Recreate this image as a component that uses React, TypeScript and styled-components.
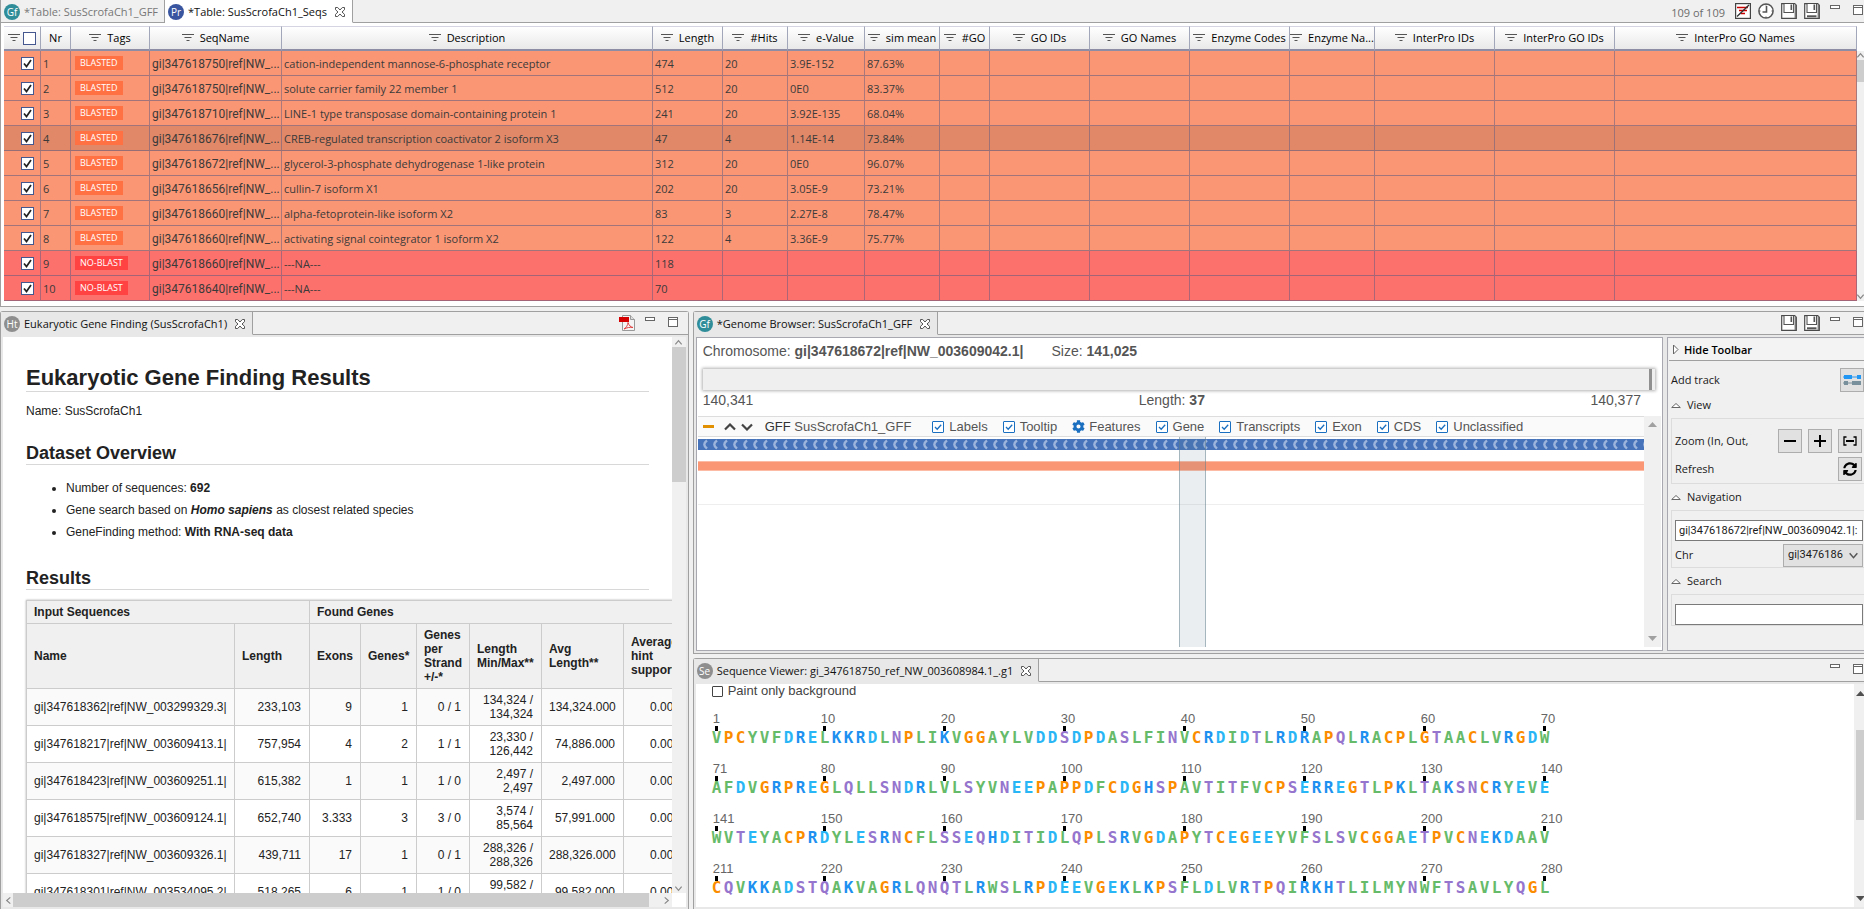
import React from 'react';
import styled, { createGlobalStyle, css } from 'styled-components';
import { FaCog, FaSyncAlt } from 'react-icons/fa';

const UI = `"Open Sans", "Noto Sans", sans-serif`;
const NARROW = `Roboto, "Open Sans", sans-serif`;
const ARIAL = `"Liberation Sans", Arial, sans-serif`;
const LINE = '#a0a0a0';

const Global = createGlobalStyle`
  *, *::before, *::after { box-sizing: border-box; }
  body { margin: 0; background: #f0f0f0; font: 11px/16px ${UI}; color: #1a1a1a; overflow: hidden; }
  button, input, select { font: inherit; color: inherit; margin: 0; }
`;

/* ---------- workbench layout ---------- */

const Workbench = styled.div`
  display: flex;
  flex-direction: column;
  gap: 4px;
  height: 100vh;
`;

const Lower = styled.div`
  display: grid;
  grid-template-columns: calc(37% - 1px) minmax(0, 1fr);
  gap: 4px;
  flex: 1;
  min-height: 0;
`;

const RightColumn = styled.div`
  display: grid;
  grid-template-rows: minmax(0, 343fr) minmax(0, 251fr);
  gap: 4px;
  min-width: 0;
  min-height: 0;
`;

const Panel = styled.section<{ $closed?: boolean }>`
  display: flex;
  flex-direction: column;
  min-width: 0;
  min-height: 0;
  background: #e8e8e8;
  border: 1px solid ${LINE};
  border-bottom-width: ${p => (p.$closed ? '1px' : '0')};
  border-radius: 3px 3px 0 0;
`;

const EdgePanel = styled(Panel)`
  border-right: 0;
  border-radius: 3px 0 0 0;
`;

const TopPanel = styled(Panel)`
  background: #fff;
  border-top: 0;
  border-right: 0;
  border-radius: 0;
`;

const PanelBody = styled.div`
  display: flex;
  flex: 1;
  min-height: 0;
  padding: 2px 2px 2px 2px;
`;

const EdgeBody = styled(PanelBody)`
  padding-right: 0;
`;

/* ---------- tabs ---------- */

const TabBar = styled.header`
  display: flex;
  height: 23px;
  background: #f0f0f0;
`;

const TabItem = styled.div<{ $tone: 'idle' | 'white' | 'gray' }>`
  display: flex;
  align-items: center;
  gap: 4px;
  padding: 1px 6px 0 3px;
  white-space: nowrap;
  color: ${p => (p.$tone === 'idle' ? '#777' : '#111')};
  border-right: 1px solid ${LINE};
  border-bottom: 1px solid ${p => (p.$tone === 'idle' ? LINE : 'transparent')};
  background: ${p => ({ idle: '#f0f0f0', white: '#fff', gray: '#e8e8e8' })[p.$tone]};
`;

const TabTitle = styled.h2`
  margin: 0;
  font-size: 11px;
  font-weight: 400;
`;

const TabRest = styled.div`
  display: flex;
  flex: 1;
  justify-content: flex-end;
  padding: 3px 1px 0 0;
  border-bottom: 1px solid ${LINE};
`;

const Badge = styled.span<{ $color: string }>`
  display: grid;
  place-items: center;
  width: 16px;
  height: 16px;
  border-radius: 50%;
  background: ${p => p.$color};
  color: #fff;
  font-size: 10px;
  line-height: 16px;
`;

const IconButton = styled.button`
  display: block;
  height: 16px;
  padding: 0;
  border: 0;
  background: none;
  line-height: 0;
`;

const CloseButton = styled(IconButton)`
  height: 12px;
  margin-left: 3px;
`;

const Tools = styled.div<{ $inset?: boolean }>`
  display: flex;
  gap: 7px;
  padding-right: ${p => (p.$inset ? '9px' : '0')};
`;

const ToolGroup = styled.div`
  display: flex;
  gap: 13px;
  margin-left: 3px;
`;

const Counter = styled.span`
  margin-right: 3px;
  padding-top: 2px;
  color: #6c6c6c;
`;

/* ---------- icons ---------- */

const CloseIcon = () => (
  <svg width="12" height="12" viewBox="0 0 12 12" fill="#fff" stroke="#555" strokeWidth="1">
    <path d="M1.500 1.500h2.200L6 4l2.300-2.500h2.200v2.200L8 6l2.500 2.300v2.200H8.300L6 8l-2.300 2.500H1.500V8.300L4 6 1.500 3.700z" />
  </svg>
);
const MinIcon = () => (
  <svg width="10" height="16" viewBox="0 0 10 16"><rect x="0.500" y="2.500" width="9" height="3" fill="#fff" stroke="#666" /></svg>
);
const MaxIcon = () => (
  <svg width="10" height="16" viewBox="0 0 10 16">
    <rect x="0.500" y="2.500" width="9" height="9" fill="#fff" stroke="#666" />
    <path d="M0 4.500h10" stroke="#666" />
  </svg>
);
const FloppyIcon = ({ bar }: { bar?: boolean }) => (
  <svg width="16" height="16" viewBox="0 0 16 16">
    <path d="M.7.7h13l1.600 1.600v13H.7z" fill="#fff" stroke="#4a4a4a" strokeWidth="1.200" />
    <path d="M14.300 1.500v13.500" stroke="#777" strokeWidth="1.400" />
    <path d="M3 1v8.500h9.500V1" fill="#fff" stroke="#555" strokeWidth="1.100" />
    <path d="M10.300 1.500v5.500" stroke="#555" strokeWidth="1.600" />
    {bar && <path d="M3 13.300h9.500" stroke="#555" strokeWidth="2" />}
  </svg>
);
const ClearFilterIcon = () => (
  <svg width="16" height="16" viewBox="0 0 16 16" fill="none">
    <rect x=".6" y=".6" width="14.800" height="14.800" fill="#fff" stroke="#444" strokeWidth="1.200" />
    <path d="M2 4.500h11M4 7.500h8M6 10.500h4" stroke="#c00" strokeWidth="1.300" />
    <path d="M2 13.500 14 2" stroke="#333" strokeWidth="1.400" />
  </svg>
);
const ClockIcon = () => (
  <svg width="16" height="16" viewBox="0 0 16 16" fill="none" stroke="#555">
    <circle cx="8" cy="8" r="7.100" fill="#fff" strokeWidth="1.500" />
    <path d="M8.500 3v6H4.500" strokeWidth="1.600" />
    <path d="M8 1v1.500M8 13.500V15M1 8h1.500M13.500 8H15" strokeWidth="1" />
  </svg>
);
const PdfIcon = () => (
  <svg width="16" height="16" viewBox="0 0 16 16">
    <path d="M3.500.5h8l4 4v11h-12z" fill="#f4f4f4" stroke="#999" />
    <path d="M11.500.5v4h4" fill="#ddd" stroke="#999" />
    <rect x="0" y="2" width="10" height="5" fill="#d40000" />
    <path d="M5 14c2-1 4-4 4-6.500 1 3 2.500 4.500 5 5-3-.5-6 0-9 1.500z" fill="none" stroke="#e04040" />
  </svg>
);
const FilterIcon = () => (
  <svg width="12" height="8" viewBox="0 0 12 8"><path d="M0 .5h12M2.500 3.500h7M4.500 6.500h3" stroke="#555" /></svg>
);
const TickIcon = () => (
  <svg width="13" height="13" viewBox="0 0 13 13" fill="none"><path d="M3 6.500 5.500 9.500 10 3" stroke="#222" strokeWidth="1.700" /></svg>
);
const BlueTickIcon = () => (
  <svg width="12" height="12" viewBox="0 0 12 12" fill="none"><path d="M3 6 5.200 8.200 9.200 3.800" stroke="#1a6fc0" strokeWidth="1.300" /></svg>
);
const AngleIcon = ({ turn = 0, size = 9, color = '#888' }: { turn?: number; size?: number; color?: string }) => (
  <svg width={size} height={size} viewBox="0 0 10 10" fill="none">
    <path d="M1.500 7 5 3l3.500 4" stroke={color} strokeWidth="1.300" transform={`rotate(${turn} 5 5)`} />
  </svg>
);
const SolidArrow = ({ down, color }: { down?: boolean; color: string }) => (
  <svg width="9" height="5" viewBox="0 0 9 5"><path d={down ? 'M0 0h9L4.500 5z' : 'M0 5h9L4.500 0z'} fill={color} /></svg>
);
const ChevronIcon = ({ down }: { down?: boolean }) => (
  <svg width="12" height="8" viewBox="0 0 12 8" fill="none">
    <path d={down ? 'M1 1.500 6 6.500l5-5' : 'M1 6.500 6 1.500l5 5'} stroke="#444" strokeWidth="2.200" />
  </svg>
);
const TwistIcon = ({ side }: { side?: boolean }) => (
  <svg width="10" height="11" viewBox="0 0 10 11" fill="#fff" stroke="#666">
    <path d={side ? 'M1.500 1 6 5.500 1.500 10z' : 'M.7 7.500 5 3.500l4.300 4z'} />
  </svg>
);

const windowTools = (
  <ToolGroup>
    <IconButton aria-label="Minimize"><MinIcon /></IconButton>
    <IconButton aria-label="Maximize"><MaxIcon /></IconButton>
  </ToolGroup>
);

/* ---------- check boxes ---------- */

const CheckWrap = styled.span`
  display: inline-grid;
  vertical-align: top;
  > * { grid-area: 1 / 1; }
  > svg { pointer-events: none; }
`;

const CheckInput = styled.input<{ $kind: 'row' | 'blue' | 'plain' }>`
  appearance: none;
  width: 13px;
  height: 13px;
  background: #fff;
  border: 1px solid #45578f;
  ${p => p.$kind === 'blue' && css`
    width: 12px;
    height: 12px;
    border-color: #1a6fc0;
    border-radius: 1px;
  `}
  ${p => p.$kind === 'plain' && css`
    width: 11px;
    height: 11px;
    border-color: #444;
    border-radius: 1px;
  `}
`;

function Check({ kind, on, label }: { kind: 'row' | 'blue' | 'plain'; on?: boolean; label?: string }) {
  return (
    <CheckWrap>
      <CheckInput type="checkbox" $kind={kind} defaultChecked={on} aria-label={label} />
      {on && (kind === 'row' ? <TickIcon /> : <BlueTickIcon />)}
    </CheckWrap>
  );
}

/* ---------- sequence table ---------- */

const GridArea = styled.div`
  display: flex;
  padding: 3px 0 5px 3px;
`;

const SeqTable = styled.table`
  flex: 1;
  min-width: 0;
  width: 100%;
  table-layout: fixed;
  border-collapse: separate;
  border-spacing: 0;
  color: #3a3a3a;
`;

const SeqTh = styled.th`
  height: 25px;
  padding: 0 2px;
  font-weight: 400;
  color: #000;
  background: linear-gradient(#fff, #e9e9e9);
  border-top: 1px solid #d4d4e2;
  border-right: 1px solid #a3a7ba;
  border-bottom: 2px solid #8d8ea6;
`;

const SeqTr = styled.tr<{ $tone: 'hit' | 'selected' | 'miss' }>`
  background: ${p => ({ hit: '#fa9674', selected: '#e08868', miss: '#fd716c' })[p.$tone]};
`;

const SeqTd = styled.td`
  height: 25px;
  padding: 2px 0 0 2px;
  white-space: nowrap;
  border-right: 1px solid rgba(90, 90, 130, 0.5);
  border-bottom: 1px solid rgba(90, 90, 130, 0.55);
`;

const NameTd = styled(SeqTd)`
  font-family: ${NARROW};
  font-size: 12px;
`;

const CheckTd = styled(SeqTd)`
  padding: 0 6px 0 0;
  text-align: right;
  line-height: 0;
`;

const HeadLabel = styled.span`
  display: flex;
  align-items: center;
  justify-content: center;
  gap: 6px;
  white-space: nowrap;
  svg { flex: none; }
`;

const CheckHead = styled(HeadLabel)`
  gap: 3px;
`;

const Tag = styled.span<{ $miss: boolean }>`
  display: inline-block;
  vertical-align: middle;
  margin: 0 0 3px 2px;
  padding: 0 5px;
  font-size: 9px;
  line-height: 14px;
  color: #fff;
  background: ${p => (p.$miss ? '#ff4343' : '#ff7043')};
`;

const columns: [string, number?][] = [
  ['Nr', 30], ['Tags', 79], ['SeqName', 132], ['Description', 371], ['Length', 70], ['#Hits', 65],
  ['e-Value', 77], ['sim mean', 75], ['#GO', 50], ['GO IDs', 100], ['GO Names', 100], ['Enzyme Codes', 100],
  ['Enzyme Na...', 85], ['InterPro IDs', 120], ['InterPro GO IDs', 120], ['InterPro GO Names'],
];

const sequences = [
  ['gi|347618750|ref|NW_...', 'cation-independent mannose-6-phosphate receptor', '474', '20', '3.9E-152', '87.63%'],
  ['gi|347618750|ref|NW_...', 'solute carrier family 22 member 1', '512', '20', '0E0', '83.37%'],
  ['gi|347618710|ref|NW_...', 'LINE-1 type transposase domain-containing protein 1', '241', '20', '3.92E-135', '68.04%'],
  ['gi|347618676|ref|NW_...', 'CREB-regulated transcription coactivator 2 isoform X3', '47', '4', '1.14E-14', '73.84%'],
  ['gi|347618672|ref|NW_...', 'glycerol-3-phosphate dehydrogenase 1-like protein', '312', '20', '0E0', '96.07%'],
  ['gi|347618656|ref|NW_...', 'cullin-7 isoform X1', '202', '20', '3.05E-9', '73.21%'],
  ['gi|347618660|ref|NW_...', 'alpha-fetoprotein-like isoform X2', '83', '3', '2.27E-8', '78.47%'],
  ['gi|347618660|ref|NW_...', 'activating signal cointegrator 1 isoform X2', '122', '4', '3.36E-9', '75.77%'],
  ['gi|347618660|ref|NW_...', '---NA---', '118', '', '', ''],
  ['gi|347618640|ref|NW_...', '---NA---', '70', '', '', ''],
];

function SequenceTable() {
  return (
    <SeqTable>
      <colgroup>
        <col width={37} />
        {columns.map(([name, w]) => <col key={name} width={w} />)}
      </colgroup>
      <thead>
        <tr>
          <SeqTh scope="col">
            <CheckHead><FilterIcon /><Check kind="row" label="Select all" /></CheckHead>
          </SeqTh>
          {columns.map(([name]) => (
            <SeqTh key={name} scope="col">
              <HeadLabel>{name !== 'Nr' && <FilterIcon />}{name}</HeadLabel>
            </SeqTh>
          ))}
        </tr>
      </thead>
      <tbody>
        {sequences.map(([name, ...cells], i) => {
          const miss = cells[2] === '';
          return (
            <SeqTr key={i} $tone={miss ? 'miss' : i === 3 ? 'selected' : 'hit'}>
              <CheckTd><Check kind="row" on label={`Select row ${i + 1}`} /></CheckTd>
              <SeqTd>{i + 1}</SeqTd>
              <SeqTd><Tag $miss={miss}>{miss ? 'NO-BLAST' : 'BLASTED'}</Tag></SeqTd>
              <NameTd>{name}</NameTd>
              {cells.map((cell, c) => <SeqTd key={c}>{cell}</SeqTd>)}
              {columns.slice(8).map(([title]) => <SeqTd key={title} />)}
            </SeqTr>
          );
        })}
      </tbody>
    </SeqTable>
  );
}

/* ---------- scroll bars ---------- */

const ScrollTrack = styled.div<{ $axis: 'x' | 'y'; $size: number }>`
  display: flex;
  flex: none;
  flex-direction: ${p => (p.$axis === 'y' ? 'column' : 'row')};
  ${p => (p.$axis === 'y' ? 'width' : 'height')}: ${p => p.$size}px;
  overflow: hidden;
  background: #f0f0f0;
`;

const ScrollEnd = styled.span<{ $length: number }>`
  display: grid;
  place-content: center;
  flex: 0 0 ${p => p.$length}px;
`;

const ScrollThumb = styled.span<{ $share: number }>`
  flex: ${p => p.$share} 0 0;
  background: #cdcdcd;
`;

const ScrollRest = styled.span<{ $share: number }>`
  flex: ${p => p.$share} 0 0;
`;

const GridScroll = styled(ScrollTrack)`
  margin-top: 25px;
`;

const SeqScroll = styled(ScrollTrack)`
  padding: 6px 0 6px 2px;
`;

/* ---------- report ---------- */

const ReportGrid = styled.div`
  display: grid;
  flex: 1;
  min-width: 0;
  min-height: 0;
  grid-template: minmax(0, 1fr) 14px / minmax(0, 1fr) 14px;
  background: #fff;
`;

const Report = styled.article`
  overflow: hidden;
  padding: 28px 23px 0;
  font: 12px/14px ${ARIAL};
  color: #222;
  p { margin: 12px 0 0; }
`;

const ReportTitle = styled.h1`
  margin: 0;
  font-size: 22px;
  line-height: 26px;
  border-bottom: 1px solid #d8d8d8;
`;

const ReportHeading = styled.h2`
  margin: 26px 0 0;
  padding-bottom: 2px;
  font-size: 18px;
  line-height: 18px;
  border-bottom: 1px solid #d8d8d8;
`;

const ReportList = styled.ul`
  margin: 12px 0 0;
  padding: 0 0 0 40px;
  line-height: 22px;
`;

const ResultTable = styled.table`
  width: 662px;
  margin-top: 10px;
  table-layout: fixed;
  border-collapse: collapse;
  box-shadow: 0 0 2px #aaa;
  th, td { border: 1px solid #ccc; padding: 0 8px 0 7px; }
  th { background: #f0f0f0; text-align: left; }
  td { height: 37px; text-align: right; }
  td:first-child { text-align: left; white-space: nowrap; }
  tbody tr:nth-child(odd) { background: #fafafa; }
`;

const GroupRow = styled.tr`
  height: 23px;
`;

const NameRow = styled.tr`
  height: 65px;
`;

const results = [
  ['gi|347618362|ref|NW_003299329.3|', '233,103', '9', '1', '0 / 1', '134,324 / 134,324', '134,324.000', '0.000'],
  ['gi|347618217|ref|NW_003609413.1|', '757,954', '4', '2', '1 / 1', '23,330 / 126,442', '74,886.000', '0.000'],
  ['gi|347618423|ref|NW_003609251.1|', '615,382', '1', '1', '1 / 0', '2,497 / 2,497', '2,497.000', '0.000'],
  ['gi|347618575|ref|NW_003609124.1|', '652,740', '3.333', '3', '3 / 0', '3,574 / 85,564', '57,991.000', '0.000'],
  ['gi|347618327|ref|NW_003609326.1|', '439,711', '17', '1', '0 / 1', '288,326 / 288,326', '288,326.000', '0.000'],
  ['gi|347618301|ref|NW_003534095.2|', '518,265', '6', '1', '1 / 0', '99,582 / 99,582', '99,582.000', '0.000'],
];
const resultColumns: [string, number][] = [
  ['Name', 208], ['Length', 75], ['Exons', 51], ['Genes*', 56], ['Genes per Strand +/-*', 53],
  ['Length Min/Max**', 72], ['Avg Length**', 82], ['Average hint support', 65],
];

function ReportPanel() {
  return (
    <Panel>
      <TabBar>
        <TabItem $tone="gray">
          <Badge $color="#8e8e8e">Ht</Badge>
          <TabTitle>Eukaryotic Gene Finding (SusScrofaCh1)</TabTitle>
          <CloseButton aria-label="Close"><CloseIcon /></CloseButton>
        </TabItem>
        <TabRest>
          <Tools $inset><IconButton aria-label="Export PDF"><PdfIcon /></IconButton>{windowTools}</Tools>
        </TabRest>
      </TabBar>
      <PanelBody>
        <ReportGrid>
          <Report>
            <ReportTitle>Eukaryotic Gene Finding Results</ReportTitle>
            <p>Name: SusScrofaCh1</p>
            <ReportHeading>Dataset Overview</ReportHeading>
            <ReportList>
              <li>Number of sequences: <b>692</b></li>
              <li>Gene search based on <b><i>Homo sapiens</i></b> as closest related species</li>
              <li>GeneFinding method: <b>With RNA-seq data</b></li>
            </ReportList>
            <ReportHeading>Results</ReportHeading>
            <ResultTable>
              <colgroup>{resultColumns.map(([name, w]) => <col key={name} width={w} />)}</colgroup>
              <thead>
                <GroupRow><th colSpan={2} scope="colgroup">Input Sequences</th><th colSpan={6} scope="colgroup">Found Genes</th></GroupRow>
                <NameRow>{resultColumns.map(([name]) => <th key={name} scope="col">{name}</th>)}</NameRow>
              </thead>
              <tbody>
                {results.map(row => <tr key={row[0]}>{row.map((cell, i) => <td key={i}>{cell}</td>)}</tr>)}
              </tbody>
            </ResultTable>
          </Report>
          <ScrollTrack $axis="y" $size={14} aria-hidden>
            <ScrollEnd $length={10}><AngleIcon /></ScrollEnd>
            <ScrollThumb $share={135} />
            <ScrollRest $share={401} />
            <ScrollEnd $length={10}><AngleIcon turn={180} /></ScrollEnd>
          </ScrollTrack>
          <ScrollTrack $axis="x" $size={14} aria-hidden>
            <ScrollEnd $length={10}><AngleIcon turn={-90} /></ScrollEnd>
            <ScrollThumb $share={636} />
            <ScrollRest $share={13} />
            <ScrollEnd $length={10}><AngleIcon turn={90} /></ScrollEnd>
          </ScrollTrack>
        </ReportGrid>
      </PanelBody>
    </Panel>
  );
}

/* ---------- genome browser ---------- */

const BrowserBody = styled(EdgeBody)`
  gap: 4px;
`;

const BrowserBox = styled.div`
  display: flex;
  flex-direction: column;
  flex: 1;
  min-width: 0;
  padding: 0 1px 3px;
  background: #fff;
  border: 1px solid #a8a8b0;
  font: 14px/16px ${ARIAL};
  color: #555;
`;

const ChromLine = styled.div`
  display: flex;
  gap: 28px;
  padding: 5px 5px 0;
`;

const Ruler = styled.div`
  display: flex;
  justify-content: flex-end;
  height: 21px;
  margin: 10px 6px 2px 5px;
  padding-right: 3px;
  background: #efefef;
  box-shadow: 0 0 3px 1px rgba(0, 0, 0, 0.3);
`;

const RulerHandle = styled.span`
  width: 3px;
  background: #909090;
`;

const RangeLine = styled.div`
  display: flex;
  justify-content: space-between;
  margin-bottom: 8px;
  padding: 0 20px 0 5px;
`;

const TrackArea = styled.div`
  display: flex;
  flex: 1;
`;

const TrackView = styled.div`
  position: relative;
  flex: 1;
  min-width: 0;
`;

const TrackHead = styled.div`
  display: flex;
  align-items: center;
  gap: 15px;
  height: 21px;
  padding-left: 5px;
  background: #fafafa;
  border-top: 1px solid #ddd;
  border-bottom: 1px solid #ddd;
  font-size: 13px;
  white-space: nowrap;
`;

const TrackName = styled.span`
  margin: 0 6px 0 -3px;
  b { font-weight: 400; color: #333; }
`;

const TrackOrder = styled.span`
  display: flex;
  gap: 5px;
  margin-left: -5px;
`;

const Option = styled.label`
  display: flex;
  align-items: center;
  gap: 5px;
  > svg { margin-right: -1px; color: #1a6fc0; }
`;

const TrackDash = styled.span`
  width: 11px;
  height: 3px;
  background: #e09000;
`;

const GeneLane = styled.svg`
  display: block;
  width: 100%;
  height: 11px;
  margin-top: 2px;
`;

const HitLane = styled.div`
  height: 10px;
  margin: 11px 0 33px;
  background: #fb9674;
  border-top: 1px solid #fcbba4;
  border-bottom: 1px solid #fcbba4;
`;

const LaneRule = styled.hr`
  margin: 0;
  border: 0;
  border-top: 1px solid #eee;
`;

const Selection = styled.div`
  position: absolute;
  top: 21px;
  bottom: 0;
  left: calc(50% + 8px);
  width: 27px;
  border: 1px solid rgba(96, 125, 139, 0.5);
  border-width: 0 1px;
  background: rgba(96, 125, 139, 0.13);
`;

const features = ['Gene', 'Transcripts', 'Exon', 'CDS', 'Unclassified'];

/* ---------- tool bar beside the browser ---------- */

const SideBox = styled.aside`
  display: flex;
  flex-direction: column;
  width: 197px;
  padding: 1px 0 0 1px;
  background: #f0f0f0;
  border: 1px solid #a8a8b0;
  border-right: 0;
`;

const SideTitle = styled.button`
  display: flex;
  align-items: center;
  gap: 2px;
  height: 22px;
  padding: 0 3px;
  border: 0;
  border-bottom: 1px solid ${LINE};
  background: #f3f3f3;
  color: #000;
  font-weight: 600;
  text-align: left;
`;

const SideRow = styled.div`
  display: flex;
  align-items: center;
  gap: 6px;
  height: 24px;
`;

const AddRow = styled(SideRow)`
  margin: 7px 0 0 2px;
`;

const SideLabel = styled.span`
  flex: 1;
  white-space: nowrap;
`;

const Fold = styled.button`
  display: flex;
  align-items: center;
  gap: 6px;
  height: 26px;
  padding: 0 2px;
  border: 0;
  background: none;
`;

const Group = styled.div<{ $fields?: boolean }>`
  display: flex;
  flex-direction: column;
  gap: ${p => (p.$fields ? '2px' : '4px')};
  margin-left: 2px;
  padding: ${p => (p.$fields ? '9px 1px 0 3px' : '10px 2px 2px 3px')};
  border: 1px solid #dcdcdc;
  border-right: 0;
`;

const ToolButton = styled.button`
  display: grid;
  place-items: center;
  width: 24px;
  height: 24px;
  padding: 0;
  border: 1px solid #adadad;
  background: #e1e1e1;
`;

const Field = styled.input`
  width: 100%;
  height: 21px;
  padding: 0 3px;
  border: 1px solid #7a7a7a;
  background: #fff;
  font-family: ${NARROW};
`;

const SelectWrap = styled.span`
  display: grid;
  width: 80px;
  > * { grid-area: 1 / 1; }
  > svg { place-self: center end; margin-right: 4px; pointer-events: none; }
`;

const Select = styled.select`
  appearance: none;
  height: 23px;
  padding: 0 16px 0 4px;
  border: 1px solid #adadad;
  border-radius: 0;
  background: #e1e1e1;
  font-family: ${NARROW};
`;

function SideToolbar() {
  return (
    <SideBox>
      <SideTitle><TwistIcon side />Hide Toolbar</SideTitle>
      <AddRow>
        <SideLabel>Add track</SideLabel>
        <ToolButton aria-label="Add track">
          <svg width="18" height="12" viewBox="0 0 18 12">
            <path d="M0 3h18" stroke="#2196f3" /><path d="M0 9h18" stroke="#78909c" />
            <path d="M1 1h8v4H1zM14 1h4v4h-4z" fill="#2196f3" />
            <path d="M1 7h4v4H1zM9 7h9v4H9z" fill="#78909c" />
          </svg>
        </ToolButton>
      </AddRow>
      <Fold><TwistIcon />View</Fold>
      <Group>
        <SideRow>
          <SideLabel>Zoom (In, Out,</SideLabel>
          <ToolButton aria-label="Zoom out"><svg width="12" height="12"><path d="M0 6h12" stroke="#000" strokeWidth="2" /></svg></ToolButton>
          <ToolButton aria-label="Zoom in"><svg width="12" height="12"><path d="M0 6h12M6 0v12" stroke="#000" strokeWidth="2" /></svg></ToolButton>
          <ToolButton aria-label="Fit">
            <svg width="14" height="10" viewBox="0 0 14 10" fill="none" stroke="#000">
              <path d="M3.500 1H1v8h2.500M10.500 1H13v8h-2.500" strokeWidth="1.300" /><path d="M3 5h8" strokeWidth="2" />
            </svg>
          </ToolButton>
        </SideRow>
        <SideRow>
          <SideLabel>Refresh</SideLabel>
          <ToolButton aria-label="Refresh"><FaSyncAlt size={14} color="#000" /></ToolButton>
        </SideRow>
      </Group>
      <Fold><TwistIcon />Navigation</Fold>
      <Group $fields>
        <Field aria-label="Position" defaultValue="gi|347618672|ref|NW_003609042.1|:" />
        <SideRow>
          <SideLabel as="label" htmlFor="chr">Chr</SideLabel>
          <SelectWrap>
            <Select id="chr"><option>gi|3476186</option></Select>
            <AngleIcon turn={180} size={11} color="#555" />
          </SelectWrap>
        </SideRow>
      </Group>
      <Fold><TwistIcon />Search</Fold>
      <Group $fields><Field aria-label="Search" /></Group>
    </SideBox>
  );
}

function BrowserPanel() {
  return (
    <EdgePanel $closed>
      <TabBar>
        <TabItem $tone="gray">
          <Badge $color="#2f8d99">Gf</Badge>
          <TabTitle>*Genome Browser: SusScrofaCh1_GFF</TabTitle>
          <CloseButton aria-label="Close"><CloseIcon /></CloseButton>
        </TabItem>
        <TabRest>
          <Tools>
            <IconButton aria-label="Save"><FloppyIcon /></IconButton>
            <IconButton aria-label="Save as"><FloppyIcon bar /></IconButton>
            {windowTools}
          </Tools>
        </TabRest>
      </TabBar>
      <BrowserBody>
        <BrowserBox>
          <ChromLine>
            <span>Chromosome: <b>gi|347618672|ref|NW_003609042.1|</b></span>
            <span>Size: <b>141,025</b></span>
          </ChromLine>
          <Ruler><RulerHandle /></Ruler>
          <RangeLine><span>140,341</span><span>Length: <b>37</b></span><span>140,377</span></RangeLine>
          <TrackArea>
            <TrackView>
              <TrackHead>
                <TrackDash />
                <TrackOrder><ChevronIcon /><ChevronIcon down /></TrackOrder>
                <TrackName><b>GFF</b> SusScrofaCh1_GFF</TrackName>
                <Option><Check kind="blue" on />Labels</Option>
                <Option><Check kind="blue" on />Tooltip</Option>
                <Option><FaCog size={13} />Features</Option>
                {features.map(f => <Option key={f}><Check kind="blue" on />{f}</Option>)}
              </TrackHead>
              <GeneLane>
                <defs>
                  <pattern id="strand" width="10" height="11" patternUnits="userSpaceOnUse">
                    <path d="M9 1.500C7 3 6.300 4 6.300 5.500S7 8 9 9.500" fill="none" stroke="#9db5dc" strokeWidth="2.400" />
                  </pattern>
                </defs>
                <rect width="100%" height="11" fill="#4673b9" />
                <rect width="100%" height="11" fill="url(#strand)" />
              </GeneLane>
              <HitLane />
              <LaneRule />
              <Selection />
            </TrackView>
            <ScrollTrack $axis="y" $size={17} aria-hidden>
              <ScrollEnd $length={17}><SolidArrow color="#a0a0a0" /></ScrollEnd>
              <ScrollRest $share={1} />
              <ScrollEnd $length={17}><SolidArrow down color="#a0a0a0" /></ScrollEnd>
            </ScrollTrack>
          </TrackArea>
        </BrowserBox>
        <SideToolbar />
      </BrowserBody>
    </EdgePanel>
  );
}

/* ---------- sequence viewer ---------- */

const Viewer = styled.div`
  flex: 1;
  min-width: 0;
  overflow: hidden;
  padding: 0 15px;
  background: #fff;
`;

const PaintOption = styled.label`
  display: flex;
  align-items: center;
  gap: 5px;
  width: max-content;
  height: 14px;
  margin: 0 0 14px 1px;
  font: 13px/14px ${ARIAL};
  color: #444;
`;

const SeqLine = styled.div`
  display: grid;
  grid-template-columns: repeat(70, 12px);
  height: 50px;
`;

const Residue = styled.div`
  display: grid;
  grid-template-rows: 14px 5px 14px;
  justify-items: center;
`;

const Index = styled.span`
  width: 8px;
  white-space: nowrap;
  font: 13px/14px ${ARIAL};
  color: #666;
`;

const Tick = styled.span`
  width: 3px;
  background: #000;
`;

const Letter = styled.span<{ $color: string }>`
  grid-row: 3;
  font: bold 16px/14px "DejaVu Sans Mono", monospace;
  color: ${p => p.$color};
`;

const residueColor = (c: string) =>
  'PCG'.includes(c) ? '#fb8c00' : 'DE'.includes(c) ? '#29b6f6' : 'RKH'.includes(c) ? '#2090f0' : 'NSTQ'.includes(c) ? '#9575cd' : '#66bb6a';

const protein = [
  'VPCYVFDRELKKRDLNPLIKVGGAYLVDDSDPDASLFINVCRDIDTLRDRAPQLRACPLGTAACLVRGDW',
  'AFDVGRPREGLQLLSNDRLVLSYVNEEPAPPDFCDGHSPAVTITFVCPSERREGTLPKLTAKSNCRYEVE',
  'WVTEYACPRDYLESRNCFLSSEQHDITIDLQPLSRVGDAPYTCEGEEYVFSLSVCGGAETPVCNEKDAAV',
  'CQVKKADSTQAKVAGRLQNQTLRWSLRPDEEVGEKLKPSFLDLVRTPQIRKHTLILMYNWFTSAVLYQGL',
];

function SequencePanel() {
  return (
    <EdgePanel>
      <TabBar>
        <TabItem $tone="gray">
          <Badge $color="#8e8e8e">Se</Badge>
          <TabTitle>Sequence Viewer: gi_347618750_ref_NW_003608984.1_.g1</TabTitle>
          <CloseButton aria-label="Close"><CloseIcon /></CloseButton>
        </TabItem>
        <TabRest><Tools>{windowTools}</Tools></TabRest>
      </TabBar>
      <EdgeBody>
        <Viewer>
          <PaintOption><Check kind="plain" />Paint only background</PaintOption>
          {protein.map((line, r) => (
            <SeqLine key={r}>
              {[...line].map((c, i) => {
                const n = r * 70 + i + 1;
                const marked = i === 0 || n % 10 === 0;
                return (
                  <Residue key={n}>
                    {marked && <Index>{n}</Index>}
                    {marked && <Tick />}
                    <Letter $color={residueColor(c)}>{c}</Letter>
                  </Residue>
                );
              })}
            </SeqLine>
          ))}
        </Viewer>
        <SeqScroll $axis="y" $size={10} aria-hidden>
          <ScrollEnd $length={6}><SolidArrow color="#505050" /></ScrollEnd>
          <ScrollRest $share={34} />
          <ScrollThumb $share={90} />
          <ScrollRest $share={75} />
          <ScrollEnd $length={6}><SolidArrow down color="#505050" /></ScrollEnd>
        </SeqScroll>
      </EdgeBody>
    </EdgePanel>
  );
}

export default function App() {
  return (
    <>
      <Global />
      <Workbench>
        <TopPanel $closed>
          <TabBar>
            <TabItem $tone="idle">
              <Badge $color="#2f8d99">Gf</Badge>
              <TabTitle>*Table: SusScrofaCh1_GFF</TabTitle>
            </TabItem>
            <TabItem $tone="white">
              <Badge $color="#3a559f">Pr</Badge>
              <TabTitle>*Table: SusScrofaCh1_Seqs</TabTitle>
              <CloseButton aria-label="Close"><CloseIcon /></CloseButton>
            </TabItem>
            <TabRest>
              <Tools>
                <Counter>109 of 109</Counter>
                <IconButton aria-label="Clear filters"><ClearFilterIcon /></IconButton>
                <IconButton aria-label="History"><ClockIcon /></IconButton>
                <IconButton aria-label="Save"><FloppyIcon /></IconButton>
                <IconButton aria-label="Save as"><FloppyIcon bar /></IconButton>
                {windowTools}
              </Tools>
            </TabRest>
          </TabBar>
          <GridArea>
            <SequenceTable />
            <GridScroll $axis="y" $size={7} aria-hidden>
              <ScrollEnd $length={8}><AngleIcon /></ScrollEnd>
              <ScrollThumb $share={22} />
              <ScrollRest $share={212} />
              <ScrollEnd $length={8}><AngleIcon turn={180} /></ScrollEnd>
            </GridScroll>
          </GridArea>
        </TopPanel>
        <Lower>
          <ReportPanel />
          <RightColumn>
            <BrowserPanel />
            <SequencePanel />
          </RightColumn>
        </Lower>
      </Workbench>
    </>
  );
}
